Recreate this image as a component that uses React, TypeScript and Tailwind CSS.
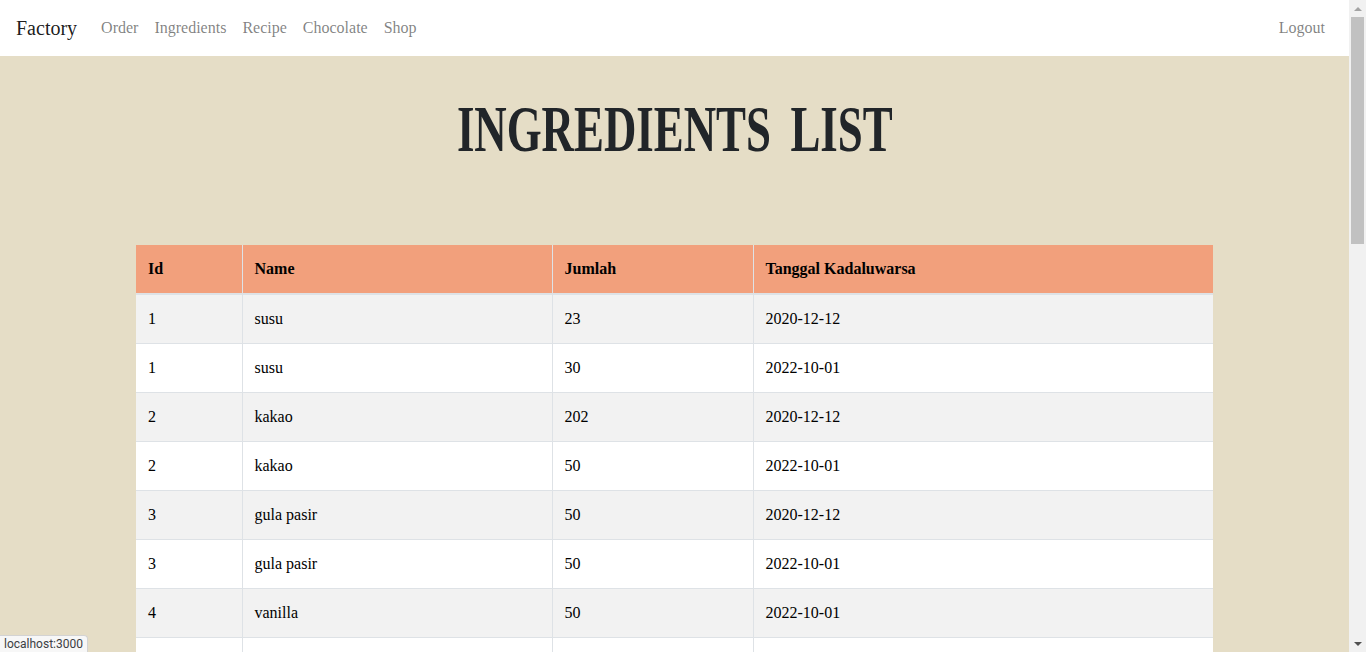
const links = ['Order', 'Ingredients', 'Recipe', 'Chocolate', 'Shop'];

const rows = [
  { id: '1', name: 'susu', jumlah: '23', tanggal: '2020-12-12' },
  { id: '1', name: 'susu', jumlah: '30', tanggal: '2022-10-01' },
  { id: '2', name: 'kakao', jumlah: '202', tanggal: '2020-12-12' },
  { id: '2', name: 'kakao', jumlah: '50', tanggal: '2022-10-01' },
  { id: '3', name: 'gula pasir', jumlah: '50', tanggal: '2020-12-12' },
  { id: '3', name: 'gula pasir', jumlah: '50', tanggal: '2022-10-01' },
  { id: '4', name: 'vanilla', jumlah: '50', tanggal: '2022-10-01' },
  // next row sits below the fold
  { id: '\u00a0', name: '\u00a0', jumlah: '\u00a0', tanggal: '\u00a0' },
];

const headers = ['Id', 'Name', 'Jumlah', 'Tanggal Kadaluwarsa'];

function Navbar() {
  return (
    <nav className="flex h-14 shrink-0 items-center justify-between bg-white px-4">
      <div className="flex items-center">
        <span className="mr-4 text-xl leading-[30px] text-black/90">Factory</span>
        {links.map((l) => (
          <a key={l} className="px-2 py-2 text-base leading-6 text-black/50">
            {l}
          </a>
        ))}
      </div>
      <a className="px-2 py-2 text-base leading-6 text-black/50">Logout</a>
    </nav>
  );
}

function Scrollbar() {
  return (
    <div className="flex h-full w-[17px] shrink-0 flex-col items-center bg-[#f1f1f1]">
      <div className="flex h-[17px] w-full items-center justify-center">
        <div className="h-0 w-0 border-x-[4px] border-b-[4px] border-x-transparent border-b-[#a3a3a3]" />
      </div>
      <div className="h-[227px] w-[13px] bg-[#c1c1c1]" />
      <div className="flex-1" />
      <div className="flex h-[17px] w-full items-center justify-center">
        <div className="h-0 w-0 border-x-[4px] border-t-[4px] border-x-transparent border-t-[#505050]" />
      </div>
    </div>
  );
}

export default function App() {
  return (
    <div className="relative flex h-screen w-full overflow-hidden font-['Liberation_Serif',serif] text-[#212529]">
      <div className="flex h-full min-w-0 flex-1 flex-col">
        <Navbar />
        <main className="flex-1 overflow-hidden bg-[#e5ddc6]">
          <h1 className="mt-[34px] text-center text-[65px] font-bold leading-[78px] text-[#212529]">
            <span className="inline-block scale-x-[0.69] [word-spacing:12px]">INGREDIENTS LIST</span>
          </h1>

          <table className="mx-auto mt-[77px] w-[1077px] table-fixed border-collapse text-base leading-6">
            <colgroup>
              <col className="w-[106px]" />
              <col className="w-[310px]" />
              <col className="w-[201px]" />
              <col className="w-[460px]" />
            </colgroup>
            <thead>
              <tr className="bg-[#f2a07c]">
                {headers.map((h, i) => (
                  <th
                    key={h}
                    className={`border-b-2 border-[#dee2e6] px-3 py-3 text-left font-bold text-black ${
                      i > 0 ? 'border-l' : ''
                    }`}
                  >
                    {h}
                  </th>
                ))}
              </tr>
            </thead>
            <tbody>
              {rows.map((r, idx) => (
                <tr key={idx} className={idx % 2 === 0 ? 'bg-[#f2f2f2]' : 'bg-white'}>
                  <td className="border-b border-[#dee2e6] px-3 py-3 text-black">{r.id}</td>
                  <td className="border-b border-l border-[#dee2e6] px-3 py-3 text-black">{r.name}</td>
                  <td className="border-b border-l border-[#dee2e6] px-3 py-3 text-black">{r.jumlah}</td>
                  <td className="border-b border-l border-[#dee2e6] px-3 py-3 text-black">{r.tanggal}</td>
                </tr>
              ))}
            </tbody>
          </table>
        </main>
      </div>
      <Scrollbar />

      {/* status bubble */}
      <div className="absolute bottom-0 left-0 rounded-tr border-t border-r border-[#d3d3d3] bg-[#f7f7f7] px-[4px] font-['Roboto',sans-serif] text-[12px] leading-[16px] text-[#3c4043]">
        localhost:3000
      </div>
    </div>
  );
}
